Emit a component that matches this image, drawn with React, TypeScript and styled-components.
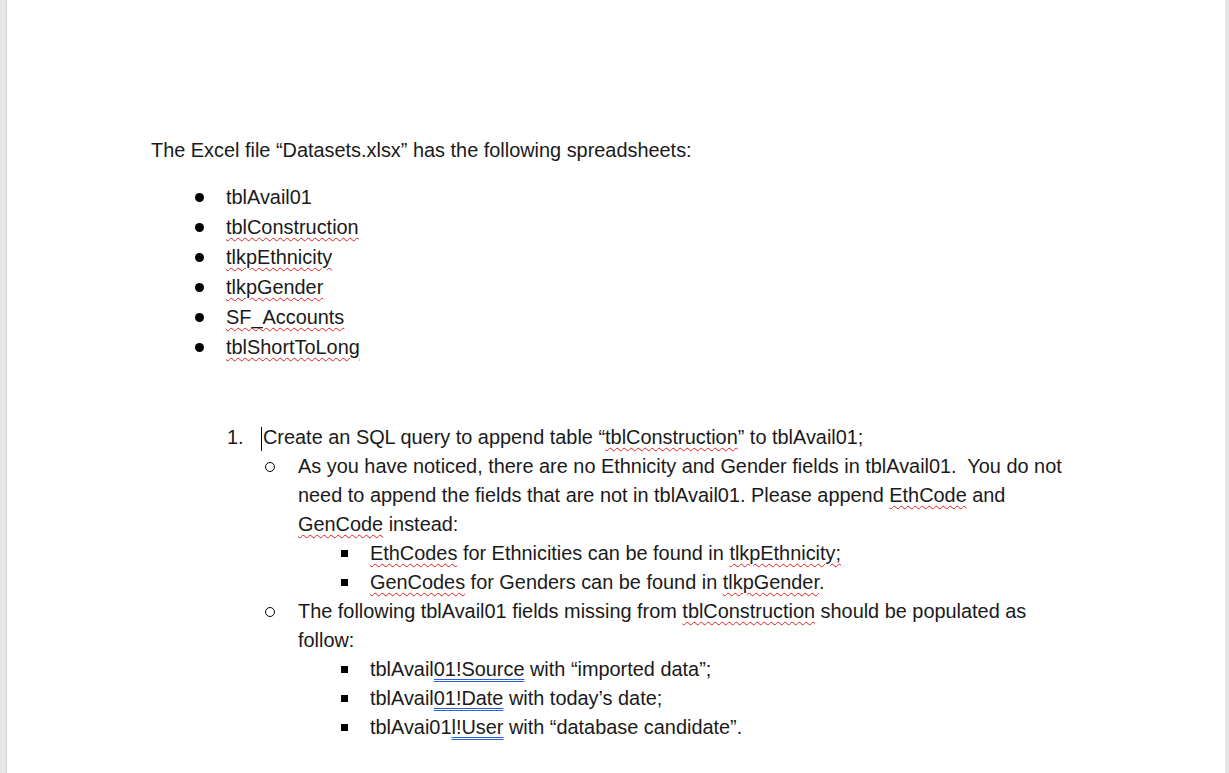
import React from 'react';
import styled, {createGlobalStyle} from 'styled-components';

const Global = createGlobalStyle`
  html, body { margin: 0; height: 100%; background: #e6e6e6; }
  #root { height: 100%; }
`

const Page = styled.div`
  margin-left: 6px;
  margin-right: 4px;
  height: 773px;
  background: #fff;
  box-sizing: border-box;
  padding: 137px 0 0 144px;
  font-family: "Liberation Sans", Arial, sans-serif;
  font-size: 19.9px;
  color: #1a1a1a;
  border-left: 1px solid #d0d0d0;
  overflow: hidden;
`

const Para = styled.div`
  line-height: 26px;
  margin-bottom: 19px;
`

const Row = styled.div<{indent: number; lh?: number}>`
  display: flex;
  padding-left: ${p => p.indent}px;
  line-height: ${p => p.lh ?? 30}px;
  white-space: nowrap;
`

const Marker = styled.div<{w: number}>`
  width: ${p => p.w}px;
  flex-shrink: 0;
`

const Dot = styled.span`
  display: inline-block;
  width: 9px; height: 9px;
  border-radius: 50%;
  background: #000;
  vertical-align: middle;
  margin-top: -3px;
`

const Circle = styled.span`
  display: inline-block;
  width: 8px; height: 8px;
  border-radius: 50%;
  border: 1px solid #000;
  vertical-align: middle;
  margin-top: -2px;
`

const Square = styled.span`
  display: inline-block;
  width: 7px; height: 7px;
  background: #000;
  vertical-align: middle;
  margin-top: -3px;
`

const Text = styled.div``

const Sp = styled.span`
  text-decoration: underline wavy #e02020;
  text-decoration-thickness: 1px;
  text-underline-offset: 3px;
`

const Gr = styled.span`
  text-decoration: underline double #2b62d6;
  text-decoration-thickness: 1px;
  text-underline-offset: 3px;
`

const Cursor = styled.span`
  display: inline-block;
  width: 1px;
  height: 24px;
  background: #000;
  vertical-align: middle;
  margin-right: 1px;
`

const Spacer = styled.div<{h: number}>`
  height: ${p => p.h}px;
`

const bullets: React.ReactNode[] = [
  'tblAvail01',
  <Sp>tblConstruction</Sp>,
  <Sp>tlkpEthnicity</Sp>,
  <Sp>tlkpGender</Sp>,
  <Sp>SF_Accounts</Sp>,
  <Sp>tblShortToLong</Sp>,
]

export default function App() {
  return (
    <>
      <Global/>
      <Page>
        <Para>The Excel file “Datasets.xlsx” has the following spreadsheets:</Para>
        {bullets.map((b, i) => (
          <Row key={i} indent={44}>
            <Marker w={31}><Dot/></Marker>
            <Text>{b}</Text>
          </Row>
        ))}
        <Spacer h={61}/>
        <Row indent={76} lh={29}>
          <Marker w={34}>1.</Marker>
          <Text><Cursor/>Create an SQL query to append table “<Sp>tblConstruction</Sp>” to tblAvail01;</Text>
        </Row>
        <Row indent={114} lh={29}>
          <Marker w={33}><Circle/></Marker>
          <Text>As you have noticed, there are no Ethnicity and Gender fields in tblAvail01.&nbsp; You do not<br/>need to append the fields that are not in tblAvail01. Please append <Sp>EthCode</Sp> and<br/><Sp>GenCode</Sp> instead:</Text>
        </Row>
        <Row indent={190} lh={29}>
          <Marker w={29}><Square/></Marker>
          <Text><Sp>EthCodes</Sp> for Ethnicities can be found in <Sp>tlkpEthnicity;</Sp></Text>
        </Row>
        <Row indent={190} lh={29}>
          <Marker w={29}><Square/></Marker>
          <Text><Sp>GenCodes</Sp> for Genders can be found in <Sp>tlkpGender</Sp>.</Text>
        </Row>
        <Row indent={114} lh={29}>
          <Marker w={33}><Circle/></Marker>
          <Text>The following tblAvail01 fields missing from <Sp>tblConstruction</Sp> should be populated as<br/>follow:</Text>
        </Row>
        <Row indent={190} lh={29}>
          <Marker w={29}><Square/></Marker>
          <Text>tblAvail<Gr>01!Source</Gr> with “imported data”;</Text>
        </Row>
        <Row indent={190} lh={29}>
          <Marker w={29}><Square/></Marker>
          <Text>tblAvail<Gr>01!Date</Gr> with today’s date;</Text>
        </Row>
        <Row indent={190} lh={29}>
          <Marker w={29}><Square/></Marker>
          <Text>tblAvai01<Gr>l!User</Gr> with “database candidate”.</Text>
        </Row>
      </Page>
    </>
  );
}
